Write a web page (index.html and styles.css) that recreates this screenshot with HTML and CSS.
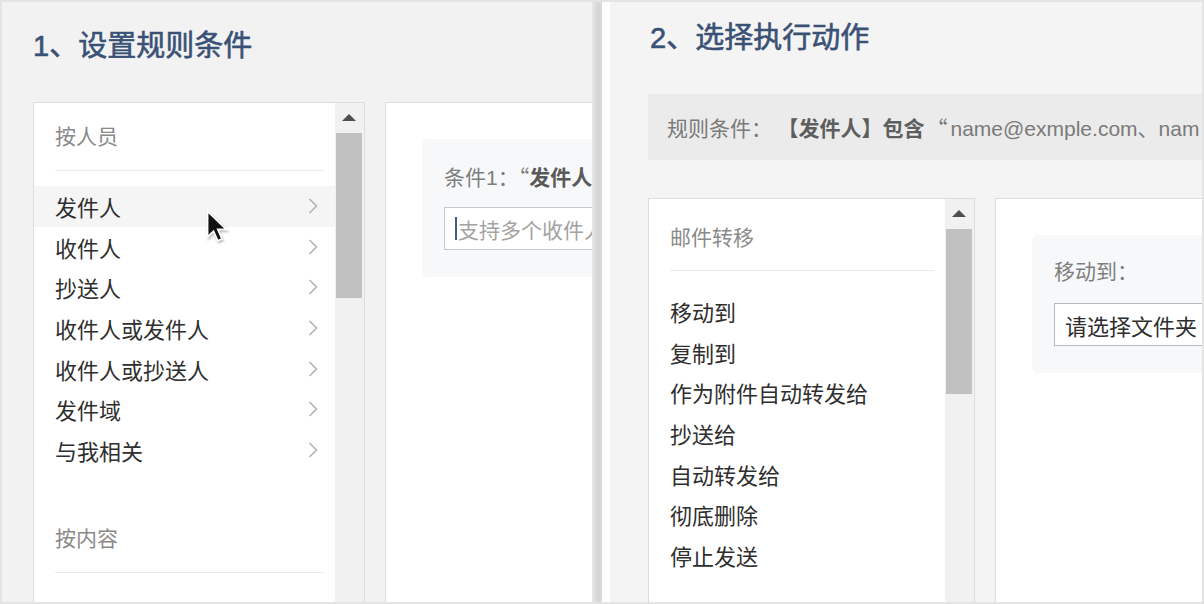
FILE: index.html
```html
<!DOCTYPE html>
<html lang="zh-CN">
  <head>
    <meta charset="UTF-8" />
    <meta name="viewport" content="width=device-width, initial-scale=1.0" />
    <title>邮件规则</title>
    <link rel="stylesheet" href="styles.css">
  </head>
  <body>
    <div class="frame">
      <!-- Step 1 -->
      <section class="panel panel-rules">
        <h2 class="step-title">1、设置规则条件</h2>
        <div class="columns">
          <div class="list-box">
            <div class="list">
              <div class="group-title">按人员</div>
              <ul class="options">
                <li class="option is-hover">发件人<svg class="chevron" viewBox="0 0 10 16"><path d="M1.5 1l7 7-7 7"/></svg></li>
                <li class="option">收件人<svg class="chevron" viewBox="0 0 10 16"><path d="M1.5 1l7 7-7 7"/></svg></li>
                <li class="option">抄送人<svg class="chevron" viewBox="0 0 10 16"><path d="M1.5 1l7 7-7 7"/></svg></li>
                <li class="option">收件人或发件人<svg class="chevron" viewBox="0 0 10 16"><path d="M1.5 1l7 7-7 7"/></svg></li>
                <li class="option">收件人或抄送人<svg class="chevron" viewBox="0 0 10 16"><path d="M1.5 1l7 7-7 7"/></svg></li>
                <li class="option">发件域<svg class="chevron" viewBox="0 0 10 16"><path d="M1.5 1l7 7-7 7"/></svg></li>
                <li class="option">与我相关<svg class="chevron" viewBox="0 0 10 16"><path d="M1.5 1l7 7-7 7"/></svg></li>
              </ul>
              <div class="group-title group-next">按内容</div>
            </div>
            <div class="scrollbar">
              <span class="scroll-up"></span>
              <span class="scroll-thumb"></span>
            </div>
            <svg class="pointer" viewBox="0 0 16 24">
              <path d="M1 1v18l4.2-4.1 3 6.8 3-1.3-3-6.7h6z"/>
            </svg>
          </div>
          <div class="detail-box">
            <div class="detail-card">
              <div class="detail-label">条件1：<span class="cjk">“</span><b>发件人</b><span class="cjk">”</span></div>
              <div class="text-input"><span class="caret"></span>支持多个收件人</div>
            </div>
          </div>
        </div>
      </section>

      <div class="panel-edge"></div>

      <!-- Step 2 -->
      <section class="panel panel-actions">
        <h2 class="step-title">2、选择执行动作</h2>
        <div class="rule-summary">规则条件：<b>【发件人】包含</b><span class="cjk quote">“</span>name@exmple.com、nam</div>
        <div class="columns">
          <div class="list-box list-box-actions">
            <div class="list">
              <div class="group-title">邮件转移</div>
              <ul class="options">
                <li class="option">移动到</li>
                <li class="option">复制到</li>
                <li class="option">作为附件自动转发给</li>
                <li class="option">抄送给</li>
                <li class="option">自动转发给</li>
                <li class="option">彻底删除</li>
                <li class="option">停止发送</li>
              </ul>
            </div>
            <div class="scrollbar">
              <span class="scroll-up"></span>
              <span class="scroll-thumb"></span>
            </div>
          </div>
          <div class="detail-box">
            <div class="detail-card">
              <div class="detail-label">移动到：</div>
              <div class="select-input">请选择文件夹</div>
            </div>
          </div>
        </div>
      </section>
    </div>
  </body>
</html>
```

FILE: styles.css
```css
/* General Reset */
* {
  margin: 0;
  padding: 0;
  box-sizing: border-box;
}

body {
  font-family: "Liberation Sans", "Noto Sans CJK SC", sans-serif;
  background: #fff;
  color: #333;
}

/* full-width CJK punctuation */
.cjk {
  font-family: "Noto Sans CJK SC", sans-serif;
}

.frame {
  width: 1204px;
  height: 604px;
  border: 2px solid #e4e4e4;
  display: flex;
  overflow: hidden;
}

.panel {
  position: relative;
  overflow: hidden;
}

.panel-rules {
  width: 590px;
  flex: none;
  background: #f2f2f2;
  padding: 24px 0 0 31px;
}

.panel-edge {
  width: 10px;
  flex: none;
  background: linear-gradient(90deg, #e8e8e8, #d4d4d4 60%, #dcdcdc);
}

.panel-actions {
  flex: 1;
  background: #f4f4f4;
  border-left: 8px solid #fff;
  padding: 16px 0 0 38px;
}

.step-title {
  font-size: 29px;
  line-height: 40px;
  font-weight: 400;
  -webkit-text-stroke: 0.6px #3a5176;
  color: #3a5176;
  margin-bottom: 36px;
}

.panel-actions .step-title {
  margin-bottom: 36px;
  padding-left: 2px;
}

.rule-summary {
  height: 66px;
  line-height: 66px;
  padding-left: 19px;
  background: #ebebeb;
  font-size: 21px;
  color: #7a7a7a;
  white-space: nowrap;
  margin-bottom: 38px;
}

.rule-summary b {
  color: #5e5e5e;
  margin-left: 16px;
}

.rule-summary .quote {
  margin: 0 3px 0 2px;
}

.columns {
  display: flex;
  gap: 20px;
}

/* List with fake scrollbar */
.list-box {
  position: relative;
  flex: none;
  width: 332px;
  height: 520px;
  display: flex;
  background: #fff;
  border: 1px solid #dcdcdc;
}

.list-box-actions {
  width: 327px;
}

.list {
  flex: 1;
}

.group-title {
  height: 68px;
  line-height: 68px;
  margin: 0 11px 0 21px;
  border-bottom: 1px solid #ebebeb;
  font-size: 21px;
  color: #8a8a8a;
}

.group-next {
  margin-top: 35px;
}

.list-box-actions .group-title {
  height: 72px;
  line-height: 78px;
}

.options {
  list-style: none;
  margin-top: 15px;
}

.list-box-actions .options {
  margin-top: 20px;
}

.option {
  height: 40.6px;
  display: flex;
  align-items: center;
  justify-content: space-between;
  padding: 0 17px 0 21px;
  font-size: 22px;
  color: #2e2e2e;
}

.option.is-hover {
  background: #f5f5f5;
}

.chevron {
  width: 10px;
  height: 16px;
  fill: none;
  stroke: #b4b4b4;
  stroke-width: 1.6;
}

.scrollbar {
  width: 29px;
  flex: none;
  background: #f1f1f1;
  padding: 0 2px 0 1px;
  display: flex;
  flex-direction: column;
  align-items: stretch;
}

.scroll-up {
  height: 30px;
  position: relative;
}

.scroll-up::before {
  content: '';
  position: absolute;
  left: 50%;
  top: 11px;
  margin-left: -7px;
  border-left: 7px solid transparent;
  border-right: 7px solid transparent;
  border-bottom: 7px solid #4e4e4e;
}

.scroll-thumb {
  height: 165px;
  background: #c1c1c1;
}

.pointer {
  position: absolute;
  left: 172px;
  top: 107px;
  width: 23px;
  height: 34px;
  fill: #111;
  stroke: #fff;
  stroke-width: 1.2;
  filter: drop-shadow(1px 2px 1px rgba(0, 0, 0, 0.25));
}

/* Detail pane */
.detail-box {
  flex: none;
  width: 420px;
  height: 520px;
  background: #fff;
  border: 1px solid #dcdcdc;
  padding: 36px 0 0 36px;
}

.detail-card {
  width: 420px;
  background: #f7f8fa;
  border-radius: 6px;
  padding: 22px 0 27px 22px;
}

.detail-label {
  height: 30px;
  line-height: 30px;
  font-size: 21px;
  color: #7e7e7e;
  margin-bottom: 16px;
  white-space: nowrap;
}

.detail-label b {
  color: #5a5a5a;
}

.text-input,
.select-input {
  height: 43px;
  display: flex;
  align-items: center;
  background: #fff;
  white-space: nowrap;
}

.text-input {
  border: 1px solid #c9c9c9;
  padding-left: 10px;
  font-size: 21px;
  color: #a3a3a3;
}

.caret {
  width: 2px;
  height: 23px;
  background: #3d5a8c;
  margin-right: 1px;
}

.select-input {
  border: 1px solid #b9b9b9;
  padding-left: 10px;
  font-size: 22px;
  color: #2e2e2e;
}
```
